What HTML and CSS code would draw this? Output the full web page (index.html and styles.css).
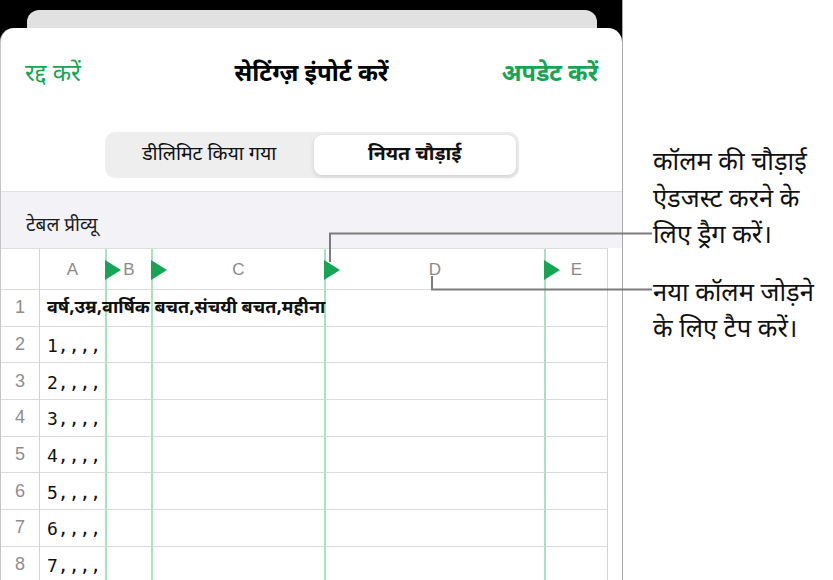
FILE: index.html
```html
<!DOCTYPE html>
<html lang="hi">
<head>
<meta charset="utf-8">
<title>सेटिंग्ज़ इंपोर्ट करें</title>
<link rel="stylesheet" href="styles.css">
</head>
<body>
<div class="page">
  <div class="device">
    <div class="back-card"></div>
    <div class="sheet">
      <div class="nav">
        <span class="nav-btn">रद्द करें</span>
        <span class="nav-title">सेटिंग्ज़ इंपोर्ट करें</span>
        <span class="nav-btn nav-done">अपडेट करें</span>
      </div>
      <div class="seg-wrap">
        <div class="seg">
          <div class="seg-item">डीलिमिट किया गया</div>
          <div class="seg-item active">नियत चौड़ाई</div>
        </div>
      </div>
      <div class="section-head">टेबल प्रीव्यू</div>
      <div class="grid">
        <div class="cell rn hd"></div>
        <div class="cell hd">A</div>
        <div class="cell hd guide"><i class="tri"></i>B</div>
        <div class="cell hd guide"><i class="tri"></i>C</div>
        <div class="cell hd guide"><i class="tri"></i>D</div>
        <div class="cell hd guide last"><i class="tri"></i>E</div>

        <div class="cell rn">1</div>
        <div class="cell data bold">वर्ष,उम्र,वार्षिक बचत,संचयी बचत,महीना</div>
        <div class="cell guide"></div>
        <div class="cell guide"></div>
        <div class="cell guide"></div>
        <div class="cell guide last"></div>

        <div class="cell rn">2</div>
        <div class="cell data mono">1,,,,</div>
        <div class="cell guide"></div>
        <div class="cell guide"></div>
        <div class="cell guide"></div>
        <div class="cell guide last"></div>

        <div class="cell rn">3</div>
        <div class="cell data mono">2,,,,</div>
        <div class="cell guide"></div>
        <div class="cell guide"></div>
        <div class="cell guide"></div>
        <div class="cell guide last"></div>

        <div class="cell rn">4</div>
        <div class="cell data mono">3,,,,</div>
        <div class="cell guide"></div>
        <div class="cell guide"></div>
        <div class="cell guide"></div>
        <div class="cell guide last"></div>

        <div class="cell rn">5</div>
        <div class="cell data mono">4,,,,</div>
        <div class="cell guide"></div>
        <div class="cell guide"></div>
        <div class="cell guide"></div>
        <div class="cell guide last"></div>

        <div class="cell rn">6</div>
        <div class="cell data mono">5,,,,</div>
        <div class="cell guide"></div>
        <div class="cell guide"></div>
        <div class="cell guide"></div>
        <div class="cell guide last"></div>

        <div class="cell rn">7</div>
        <div class="cell data mono">6,,,,</div>
        <div class="cell guide"></div>
        <div class="cell guide"></div>
        <div class="cell guide"></div>
        <div class="cell guide last"></div>

        <div class="cell rn">8</div>
        <div class="cell data mono">7,,,,</div>
        <div class="cell guide"></div>
        <div class="cell guide"></div>
        <div class="cell guide"></div>
        <div class="cell guide last"></div>
      </div>
    </div>
  </div>
  <div class="notes">
    <p class="note note-drag">कॉलम की चौड़ाई<br>ऐडजस्ट करने के<br>लिए ड्रैग करें।</p>
    <p class="note note-tap">नया कॉलम जोड़ने<br>के लिए टैप करें।</p>
  </div>
  <svg class="leaders" width="833" height="580" viewBox="0 0 833 580" aria-hidden="true">
    <polyline points="330,262 330,233.5 652,233.5" fill="none" stroke="#7c7c7c" stroke-width="2"/>
    <polyline points="432,276 432,289.5 652,289.5" fill="none" stroke="#7c7c7c" stroke-width="2"/>
  </svg>
</div>
</body>
</html>
```

FILE: styles.css
```css
* { box-sizing: border-box; }

html, body {
  margin: 0;
  padding: 0;
  background: #ffffff;
}

body {
  font-family: "Noto Sans Devanagari", "Noto Sans", "Lohit Devanagari", "FreeSans", sans-serif;
  color: #111111;
  width: 833px;
  height: 580px;
  overflow: hidden;
}

.page {
  position: relative;
  display: flex;
  width: 833px;
  height: 580px;
}

/* ---------- device / sheet ---------- */
.device {
  width: 623px;
  height: 580px;
  background: #000000;
  border-right: 1px solid #a8a8a8;
  display: flex;
  flex-direction: column;
  flex: none;
}

.back-card {
  height: 18px;
  margin: 10px 25px 0 27px;
  background: #e1e1e1;
  border-radius: 12px 12px 0 0;
  flex: none;
}

.sheet {
  flex: 1;
  background: #ffffff;
  border-radius: 14px 14px 0 0;
  border-left: 1px solid #c4c4c4;
  display: flex;
  flex-direction: column;
  overflow: hidden;
}

/* ---------- nav ---------- */
.nav {
  height: 88px;
  display: grid;
  grid-template-columns: 1fr auto 1fr;
  align-items: center;
  padding: 6px 24px 0 24px;
  flex: none;
}

.nav-btn {
  color: #16a552;
  font-size: 24px;
  justify-self: start;
  white-space: nowrap;
}

.nav-done {
  justify-self: end;
  font-weight: 700;
  font-size: 23.5px;
}

.nav-title {
  font-size: 24px;
  font-weight: 700;
  color: #000000;
  white-space: nowrap;
}

/* ---------- segmented control ---------- */
.seg-wrap {
  display: flex;
  justify-content: center;
  padding: 16px 0 13px 0;
  flex: none;
}

.seg {
  width: 414px;
  height: 46px;
  margin-left: 1px;
  background: #eeeeef;
  border-radius: 10px;
  padding: 3px;
  display: grid;
  grid-template-columns: 1fr 1fr;
  gap: 3px;
}

.seg-item {
  display: flex;
  align-items: center;
  justify-content: center;
  font-size: 19.5px;
  color: #111111;
  border-radius: 8px;
  white-space: nowrap;
  padding-top: 1px;
}

.seg-item.active {
  background: #ffffff;
  font-weight: 700;
  box-shadow: 0 2px 5px rgba(0, 0, 0, 0.12), 0 0 1px rgba(0, 0, 0, 0.1);
}

/* ---------- section header ---------- */
.section-head {
  height: 57px;
  background: #f2f2f7;
  border-top: 1px solid #e2e2e6;
  padding: 12px 0 0 25px;
  display: flex;
  align-items: center;
  font-size: 19px;
  color: #1c1c1c;
  flex: none;
}

/* ---------- grid ---------- */
.grid {
  display: grid;
  grid-template-columns: 39px 65px 46px 173px 220px 64px;
  grid-template-rows: 41px;
  grid-auto-rows: 36.7px;
  border-top: 1px solid #dedede;
  width: 607px;
  flex: none;
}

.cell {
  border-bottom: 1px solid #dadada;
  display: flex;
  align-items: center;
  min-width: 0;
}

.rn {
  justify-content: center;
  border-right: 1px solid #d3d3d3;
  font-family: "Liberation Sans", Arial, sans-serif;
  font-size: 18px;
  color: #8e8e8e;
}

.hd {
  position: relative;
  justify-content: center;
  font-family: "Liberation Sans", Arial, sans-serif;
  font-size: 17px;
  color: #8a8a8a;
  padding-top: 2px;
}

.guide {
  border-left: 2px solid #a9e2c3;
}

.last {
  border-right: 1px solid #d3d3d3;
}

.tri {
  position: absolute;
  left: -2px;
  top: 11px;
  width: 0;
  height: 0;
  border-top: 10.5px solid transparent;
  border-bottom: 10.5px solid transparent;
  border-left: 16px solid #16a552;
}

.data {
  padding-left: 7px;
  white-space: nowrap;
  overflow: visible;
  position: relative;
  z-index: 1;
}

.bold {
  font-weight: 700;
  font-size: 18px;
  color: #111111;
  padding-top: 2px;
}

.mono {
  font-family: "DejaVu Sans Mono", "Liberation Mono", monospace;
  font-size: 18px;
  color: #111111;
  padding-top: 2px;
}

/* ---------- notes ---------- */
.notes {
  flex: 1;
  padding: 146px 0 0 30px;
}

.note {
  margin: 0;
  font-size: 25.5px;
  line-height: 36.5px;
  color: #111111;
  white-space: nowrap;
}

.note-tap {
  margin-top: 21px;
}

.leaders {
  position: absolute;
  left: 0;
  top: 0;
  pointer-events: none;
}
```
